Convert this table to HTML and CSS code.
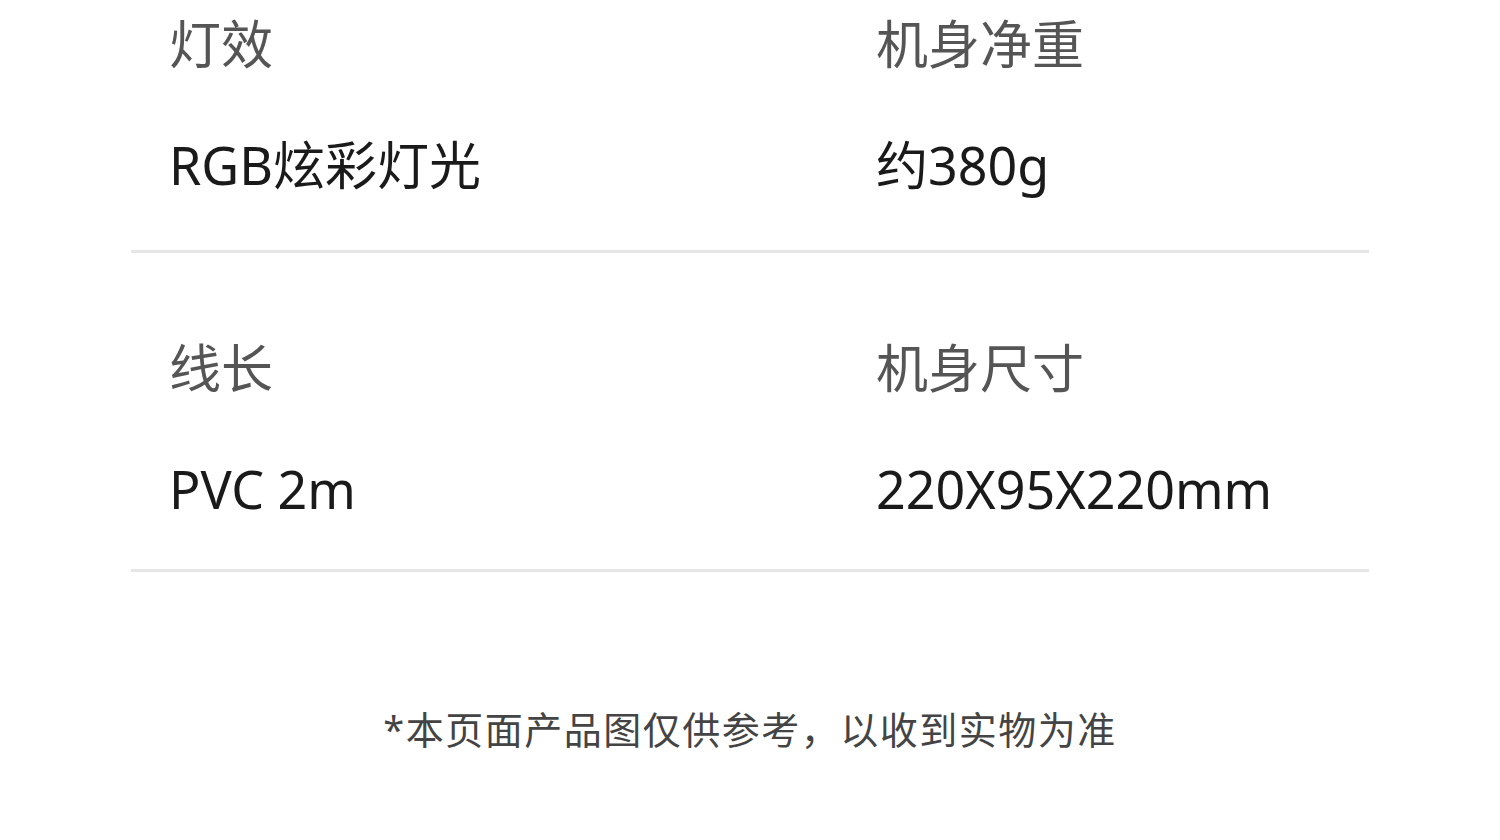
FILE: index.html
```html
<!DOCTYPE html>
<html lang="zh-CN">
<head>
<meta charset="UTF-8">
<meta name="viewport" content="width=device-width, initial-scale=1.0">
<title>产品参数</title>
<link rel="stylesheet" href="styles.css">
</head>
<body>
<div class="specs">
  <!-- 参数列表 -->
  <div class="spec-row spec-row-first">
    <div class="spec-item">
      <div class="spec-label">灯效</div>
      <div class="spec-value">RGB炫彩灯光</div>
    </div>
    <div class="spec-item">
      <div class="spec-label">机身净重</div>
      <div class="spec-value">约380g</div>
    </div>
  </div>
  <div class="spec-row">
    <div class="spec-item">
      <div class="spec-label">线长</div>
      <div class="spec-value">PVC 2m</div>
    </div>
    <div class="spec-item">
      <div class="spec-label">机身尺寸</div>
      <div class="spec-value">220X95X220mm</div>
    </div>
  </div>
  <p class="note">*本页面产品图仅供参考，以收到实物为准</p>
</div>
</body>
</html>
```

FILE: styles.css
```css
body, html {
  margin: 0;
  background-color: #fff;
}

body {
  font-family: "Noto Sans", "Noto Sans CJK SC", sans-serif;
}

.specs {
  padding: 0 131px;
}

.spec-row {
  display: grid;
  grid-template-columns: 707px 1fr;
  padding: 80px 0 45px 38px;
  border-bottom: 3px solid #e6e6e6;
}

.spec-row-first {
  padding-top: 9px;
  padding-bottom: 50px;
}

.spec-item {
  display: flex;
  flex-direction: column;
  gap: 51px;
}

.spec-label {
  font-size: 52px;
  line-height: 70px;
  color: #555;
}

.spec-value {
  font-size: 52px;
  line-height: 70px;
  color: #1a1a1a;
}

.note {
  margin: 0;
  padding-top: 132px;
  text-align: center;
  font-size: 38px;
  line-height: 50px;
  letter-spacing: 1.5px;
  color: #444;
}
```
